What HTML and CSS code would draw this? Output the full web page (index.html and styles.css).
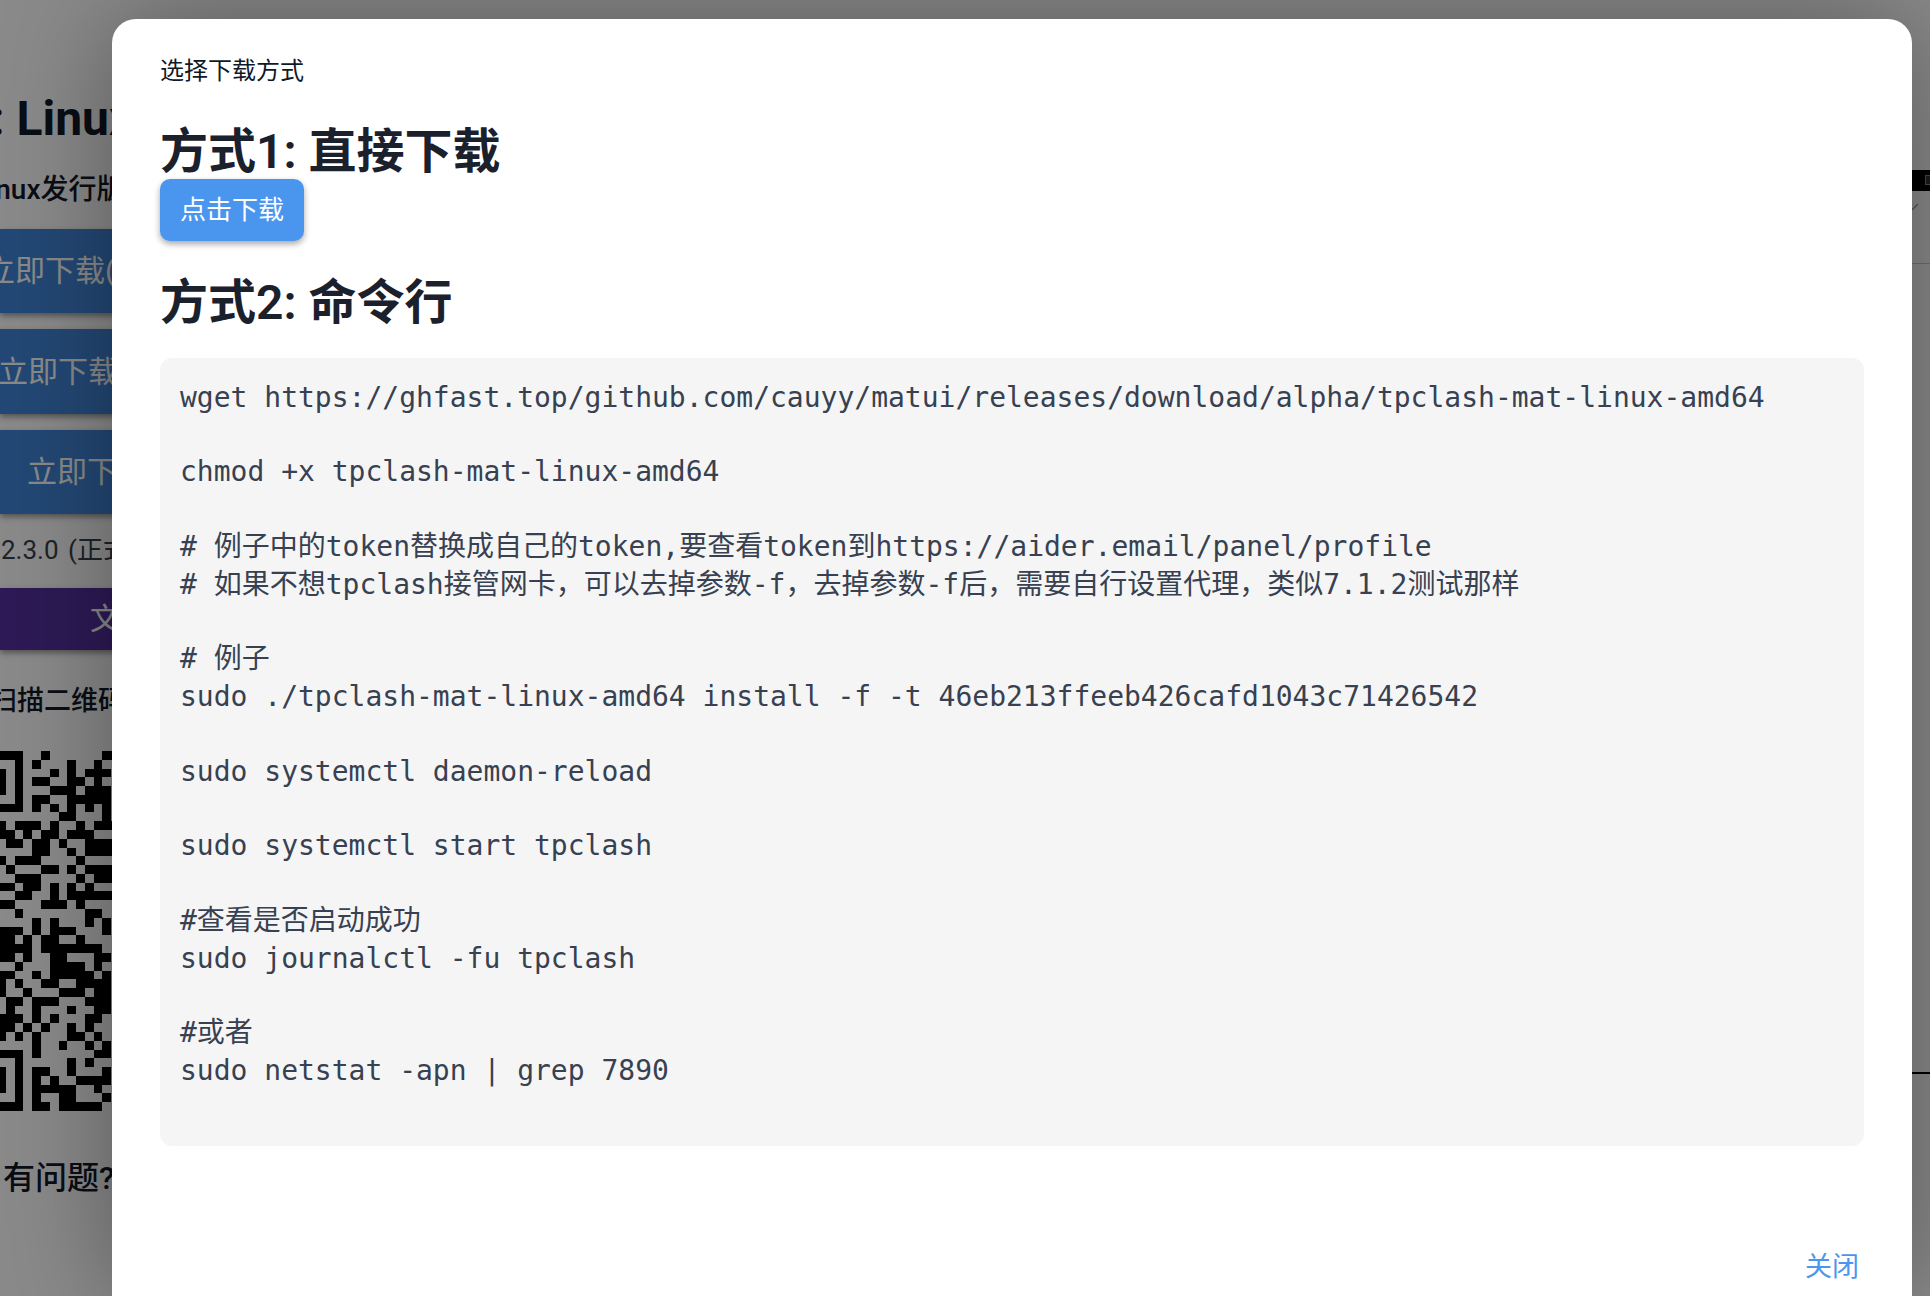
FILE: index.html
```html
<!DOCTYPE html>
<html lang="zh-CN">
<head>
<meta charset="utf-8">
<title>选择下载方式</title>
<link rel="stylesheet" href="styles.css">
</head>
<body>
<div class="page">
  <main class="left">
    <h1 class="page-title">: Linux 版本下载</h1>
    <p class="page-sub">Linux发行版本</p>
    <a class="dl-btn first">立即下载(amd64)</a>
    <a class="dl-btn second">立即下载</a>
    <a class="dl-btn third">立即下载</a>
    <p class="version">2.3.0 (正式版)</p>
    <a class="doc-btn">文档</a>
    <p class="scan">扫描二维码</p>
    <svg class="qr" viewBox="4 0 14 41" shape-rendering="crispEdges" aria-hidden="true">
      <path d="M4 0h3v1h-3zM9 0h1v1h-1zM16 0h2v1h-2zM6 1h1v1h-1zM8 1h1v1h-1zM12 1h1v1h-1zM15 1h1v1h-1zM4 2h1v1h-1zM6 2h1v1h-1zM10 2h1v1h-1zM12 2h1v1h-1zM14 2h3v1h-3zM4 3h1v1h-1zM6 3h1v1h-1zM8 3h2v1h-2zM12 3h2v1h-2zM15 3h1v1h-1zM4 4h1v1h-1zM6 4h1v1h-1zM10 4h3v1h-3zM14 4h3v1h-3zM6 5h1v1h-1zM8 5h2v1h-2zM12 5h5v1h-5zM4 6h3v1h-3zM8 6h1v1h-1zM10 6h1v1h-1zM12 6h1v1h-1zM14 6h1v1h-1zM16 6h1v1h-1zM11 7h2v1h-2zM16 7h1v1h-1zM4 8h1v1h-1zM6 8h3v1h-3zM10 8h1v1h-1zM13 8h1v1h-1zM15 8h3v1h-3zM4 9h2v1h-2zM7 9h1v1h-1zM9 9h2v1h-2zM12 9h3v1h-3zM5 10h2v1h-2zM8 10h2v1h-2zM11 10h1v1h-1zM14 10h4v1h-4zM8 11h2v1h-2zM12 11h1v1h-1zM14 11h4v1h-4zM4 12h1v1h-1zM6 12h3v1h-3zM13 12h1v1h-1zM5 13h1v1h-1zM9 13h2v1h-2zM12 13h1v1h-1zM14 13h4v1h-4zM6 14h3v1h-3zM13 14h1v1h-1zM15 14h3v1h-3zM4 15h2v1h-2zM7 15h2v1h-2zM10 15h1v1h-1zM12 15h1v1h-1zM14 15h1v1h-1zM6 16h2v1h-2zM10 16h1v1h-1zM12 16h6v1h-6zM4 17h2v1h-2zM9 17h3v1h-3zM13 17h1v1h-1zM6 18h1v1h-1zM14 18h2v1h-2zM8 19h1v1h-1zM10 19h1v1h-1zM14 19h1v1h-1zM16 19h1v1h-1zM4 20h3v1h-3zM8 20h1v1h-1zM10 20h3v1h-3zM16 20h1v1h-1zM4 21h2v1h-2zM7 21h1v1h-1zM9 21h2v1h-2zM13 21h1v1h-1zM4 22h4v1h-4zM9 22h7v1h-7zM4 23h2v1h-2zM7 23h1v1h-1zM10 23h2v1h-2zM15 23h2v1h-2zM6 24h1v1h-1zM10 24h4v1h-4zM15 24h1v1h-1zM4 25h2v1h-2zM8 25h1v1h-1zM10 25h5v1h-5zM16 25h1v1h-1zM4 26h1v1h-1zM6 26h1v1h-1zM9 26h2v1h-2zM13 26h4v1h-4zM4 27h1v1h-1zM7 27h1v1h-1zM11 27h3v1h-3zM15 27h2v1h-2zM5 28h2v1h-2zM8 28h3v1h-3zM14 28h3v1h-3zM5 29h1v1h-1zM8 29h1v1h-1zM12 29h1v1h-1zM15 29h2v1h-2zM4 30h3v1h-3zM8 30h1v1h-1zM10 30h1v1h-1zM14 30h2v1h-2zM4 31h2v1h-2zM7 31h1v1h-1zM9 31h1v1h-1zM12 31h1v1h-1zM14 31h1v1h-1zM4 32h1v1h-1zM6 32h1v1h-1zM8 32h1v1h-1zM12 32h2v1h-2zM15 32h1v1h-1zM8 33h1v1h-1zM11 33h1v1h-1zM14 33h1v1h-1zM16 33h1v1h-1zM4 34h3v1h-3zM8 34h1v1h-1zM15 34h2v1h-2zM6 35h1v1h-1zM12 35h1v1h-1zM14 35h1v1h-1zM4 36h1v1h-1zM6 36h1v1h-1zM8 36h2v1h-2zM12 36h1v1h-1zM16 36h1v1h-1zM4 37h1v1h-1zM6 37h1v1h-1zM8 37h1v1h-1zM10 37h1v1h-1zM13 37h4v1h-4zM4 38h1v1h-1zM6 38h1v1h-1zM8 38h5v1h-5zM15 38h1v1h-1zM6 39h1v1h-1zM8 39h1v1h-1zM11 39h2v1h-2zM16 39h1v1h-1zM4 40h3v1h-3zM8 40h2v1h-2zM11 40h5v1h-5z"/>
    </svg>
    <p class="help">有问题?</p>
  </main>
  <aside class="right">
    <div class="right-bar"><span class="right-icon"></span></div>
    <svg class="right-mark" viewBox="0 0 6 6" aria-hidden="true"><path d="M0 6L6 0" stroke="#888" stroke-width="1.2"/></svg>
    <div class="right-divider"></div>
    <div class="right-rule"></div>
  </aside>
</div>

<div class="overlay">
  <section class="modal" role="dialog">
    <div class="modal-title">选择下载方式</div>
    <h2 class="way-one">方式1: 直接下载</h2>
    <button class="primary" type="button">点击下载</button>
    <h2 class="way-two">方式2: 命令行</h2>
    <pre class="code">wget https://ghfast.top/github.com/cauyy/matui/releases/download/alpha/tpclash-mat-linux-amd64

chmod +x tpclash-mat-linux-amd64

# 例子中的token替换成自己的token,要查看token到https://aider.email/panel/profile
# 如果不想tpclash接管网卡，可以去掉参数-f，去掉参数-f后，需要自行设置代理，类似7.1.2测试那样

# 例子
sudo ./tpclash-mat-linux-amd64 install -f -t 46eb213ffeeb426cafd1043c71426542

sudo systemctl daemon-reload

sudo systemctl start tpclash

#查看是否启动成功
sudo journalctl -fu tpclash

#或者
sudo netstat -apn | grep 7890

</pre>
    <div class="modal-actions"><button class="close" type="button">关闭</button></div>
  </section>
</div>
</body>
</html>
```
FILE: styles.css
```css
* { box-sizing: border-box; }
html, body { margin: 0; height: 100%; overflow: hidden; }
body {
  background: #fff;
  color: #111827;
  font-family: Roboto, "Noto Sans CJK SC", sans-serif;
}
p, h1, h2 { margin: 0; }

.page {
  height: 100vh;
  display: flex;
  justify-content: space-between;
  overflow: hidden;
}
.left {
  width: 140px;
  flex: none;
  white-space: nowrap;
}
.page-title {
  margin: 90px 0 0 -9px;
  font-size: 48px;
  line-height: 58px;
  font-weight: 700;
}
.page-sub {
  margin: 22px 0 0 -27px;
  font-size: 28px;
  line-height: 40px;
  font-weight: 500;
}
.dl-btn, .doc-btn {
  display: block;
  background: #4286d8;
  color: #fff;
  font-size: 30px;
  box-shadow: 0 3px 6px rgba(0, 0, 0, .4);
}
.dl-btn { height: 84px; line-height: 84px; }
.dl-btn.first { margin-top: 19px; text-indent: -15px; }
.dl-btn.second { margin-top: 16px; height: 85px; line-height: 85px; text-indent: -2px; }
.dl-btn.third { margin-top: 16px; text-indent: 27px; }
.version {
  margin-top: 18px;
  margin-left: 1px;
  font-size: 26px;
  line-height: 36px;
  word-spacing: 3px;
  color: #374151;
}
.doc-btn {
  margin-top: 20px;
  height: 62px;
  line-height: 62px;
  background: #54319f;
  text-indent: 90px;
}
.scan {
  margin: 31px 0 0 -10px;
  font-size: 27px;
  line-height: 40px;
  font-weight: 500;
}
.qr {
  display: block;
  width: 123px;
  height: 360px;
  margin: 30px 0 0 -3px;
}
.help {
  margin-top: 47px;
  margin-left: 3px;
  font-size: 32px;
  line-height: 40px;
  font-weight: 500;
}
.right {
  width: 18px;
  flex: none;
  padding-top: 170px;
}
.right-bar {
  height: 21px;
  background: #000;
  padding: 5px 0 0 13px;
}
.right-icon {
  display: block;
  width: 10px;
  height: 10px;
  border: 1px solid #888;
  background: #333;
}
.right-mark {
  display: block;
  width: 6px;
  height: 6px;
  margin-top: 13px;
}
.right-divider {
  margin-top: 53px;
  height: 1px;
  background: #ccc;
}
.right-rule {
  margin-top: 808px;
  height: 2px;
  background: #000;
}

.overlay {
  position: absolute;
  inset: 0;
  padding: 19px 18px 0 112px;
  background: rgba(0, 0, 0, .46);
  overflow: hidden;
}
.modal {
  height: 100%;
  min-height: 1277px;
  padding: 36px 48px 0;
  background: #fff;
  border-radius: 24px 24px 0 0;
  box-shadow: 0 0 110px rgba(0, 0, 0, .36);
}
.modal-title {
  font-size: 24px;
  line-height: 32px;
  font-weight: 400;
  color: #111827;
}
h2 {
  font-size: 48px;
  line-height: 54px;
  font-weight: 600;
  color: #1a202c;
}
.way-one { margin-top: 38px; }
.way-two { margin-top: 35px; }
.primary {
  display: block;
  width: 144px;
  height: 62px;
  padding: 0;
  border: 0;
  border-radius: 10px;
  background: #4a96ef;
  color: #fff;
  font: 400 26px/62px Roboto, "Noto Sans CJK SC", sans-serif;
  box-shadow: 0 3px 6px rgba(0, 0, 0, .35);
}
.code {
  margin: 28px 0 0;
  height: 788px;
  padding: 20.5px 20px 19.5px;
  border-radius: 12px;
  background: #f5f5f5;
  color: #374151;
  font-family: "DejaVu Sans Mono", "Noto Sans CJK SC", monospace;
  font-size: 28px;
  line-height: 37.4px;
}
.modal-actions {
  margin-top: 103px;
  display: flex;
  justify-content: flex-end;
  padding-right: 5px;
}
.close {
  padding: 0;
  border: 0;
  background: none;
  color: #4a96ef;
  font: 400 27px/36px Roboto, "Noto Sans CJK SC", sans-serif;
}
```
